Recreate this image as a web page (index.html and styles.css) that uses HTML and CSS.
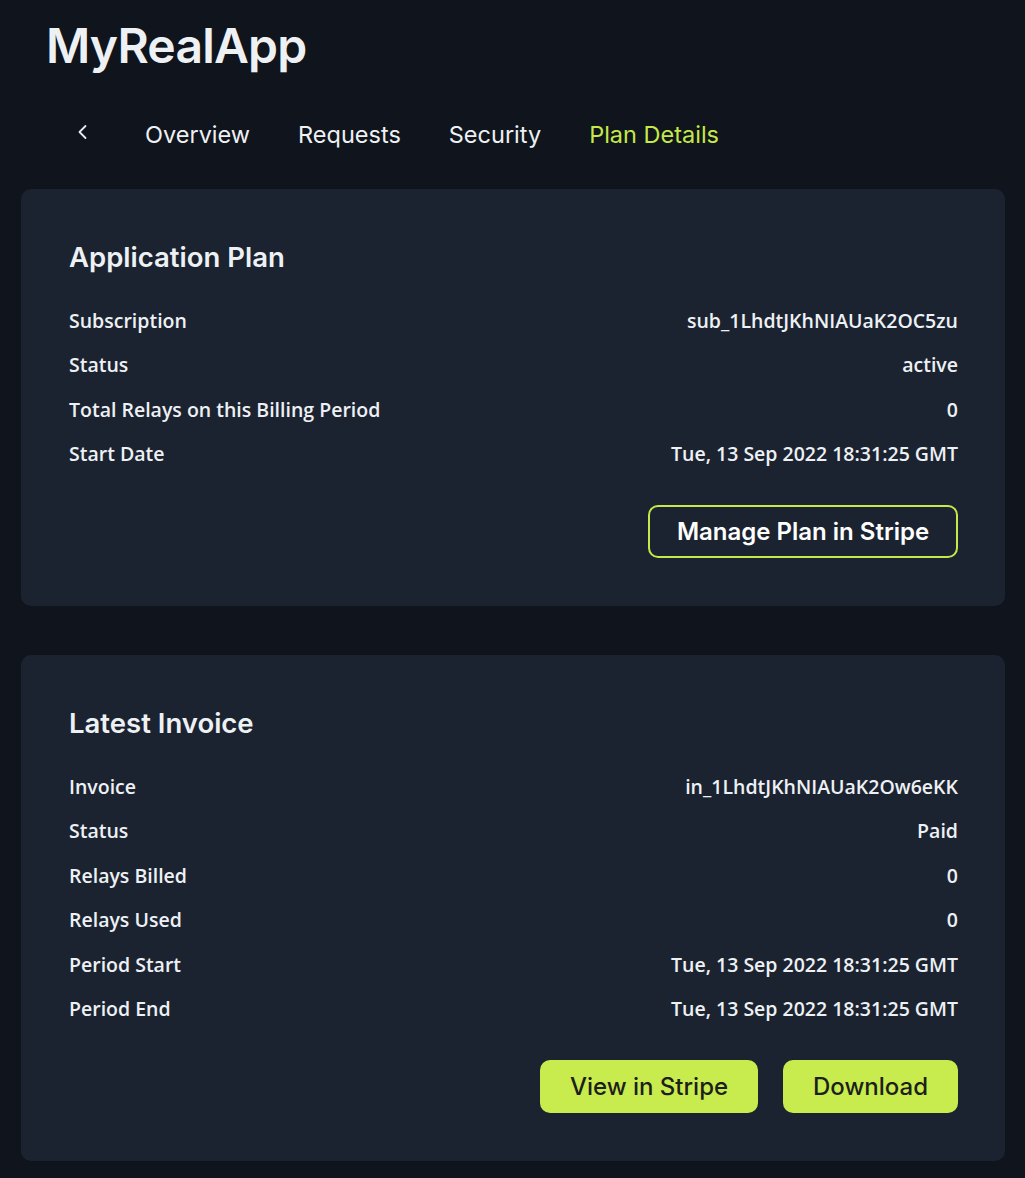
FILE: index.html
```html
<!DOCTYPE html>
<html lang="en">
<head>
<meta charset="utf-8">
<title>MyRealApp - Plan Details</title>
<link rel="stylesheet" href="styles.css">
</head>
<body>
<div class="page">
  <header class="header">
    <h1 class="app-title">MyRealApp</h1>
    <nav class="tabs">
      <a class="tab back" href="#" aria-label="Back">
        <svg width="12" height="16" viewBox="0 0 12 16"><path d="M8.5 2 L2.5 8 L8.5 14" fill="none" stroke="#e8edf2" stroke-width="1.8" stroke-linecap="round" stroke-linejoin="round"/></svg>
      </a>
      <a class="tab" href="#">Overview</a>
      <a class="tab" href="#">Requests</a>
      <a class="tab" href="#">Security</a>
      <a class="tab active" href="#">Plan Details</a>
    </nav>
  </header>

  <section class="card">
    <h2 class="card-title">Application Plan</h2>
    <dl class="rows">
      <div class="row"><dt>Subscription</dt><dd>sub_1LhdtJKhNIAUaK2OC5zu</dd></div>
      <div class="row"><dt>Status</dt><dd>active</dd></div>
      <div class="row"><dt>Total Relays on this Billing Period</dt><dd>0</dd></div>
      <div class="row"><dt>Start Date</dt><dd>Tue, 13 Sep 2022 18:31:25 GMT</dd></div>
    </dl>
    <div class="actions">
      <button class="btn btn-outline">Manage Plan in Stripe</button>
    </div>
  </section>

  <section class="card">
    <h2 class="card-title">Latest Invoice</h2>
    <dl class="rows">
      <div class="row"><dt>Invoice</dt><dd>in_1LhdtJKhNIAUaK2Ow6eKK</dd></div>
      <div class="row"><dt>Status</dt><dd>Paid</dd></div>
      <div class="row"><dt>Relays Billed</dt><dd>0</dd></div>
      <div class="row"><dt>Relays Used</dt><dd>0</dd></div>
      <div class="row"><dt>Period Start</dt><dd>Tue, 13 Sep 2022 18:31:25 GMT</dd></div>
      <div class="row"><dt>Period End</dt><dd>Tue, 13 Sep 2022 18:31:25 GMT</dd></div>
    </dl>
    <div class="actions">
      <button class="btn btn-solid btn-view">View in Stripe</button>
      <button class="btn btn-solid btn-download">Download</button>
    </div>
  </section>
</div>
</body>
</html>
```

FILE: styles.css
```css
* { box-sizing: border-box; }
html, body { margin: 0; padding: 0; }
body {
  background: #10141c;
  color: #eef1f4;
  font-family: "Open Sans", "Noto Sans", sans-serif;
}
.page {
  padding: 0 20px 20px 21px;
}
.header {
  padding-left: 25px;
}
.app-title {
  margin: 0;
  padding-top: 14px;
  font-family: Inter, "Noto Sans", sans-serif;
  font-weight: 600;
  font-size: 48px;
  line-height: 64px;
  letter-spacing: -0.8px;
  color: #eef1f4;
}
.tabs {
  display: flex;
  align-items: center;
  gap: 48px;
  padding-left: 31px;
  margin-top: 33px;
  height: 48px;
}
.tab {
  font-family: Inter, "Noto Sans", sans-serif;
  font-size: 23.5px;
  font-weight: 400;
  color: #eef1f4;
  text-decoration: none;
  line-height: 30px;
}
.tab.back {
  display: flex;
  align-items: center;
  margin-right: 8px;
  margin-top: -6px;
}
.tab.active { color: #c5e84a; }

.card {
  background: #1b2331;
  border-radius: 10px;
  padding: 50px 47px 48px 48px;
  margin-top: 30px;
}
.card + .card { margin-top: 49px; }
.card-title {
  margin: 0 0 23px;
  font-family: Inter, "Noto Sans", sans-serif;
  font-weight: 600;
  font-size: 27.5px;
  line-height: 36px;
  color: #eef1f4;
}
.rows { margin: 0; }
.row {
  display: flex;
  justify-content: space-between;
  align-items: center;
  height: 44.5px;
}
.row dt, .row dd {
  margin: 0;
  font-size: 19.5px;
  font-weight: 600;
  color: #eef1f4;
}
.actions {
  display: flex;
  justify-content: flex-end;
  gap: 25px;
  margin-top: 29px;
}
.btn {
  font-family: Inter, "Noto Sans", sans-serif;
  font-size: 24px;
  border-radius: 10px;
  cursor: pointer;
  height: 53px;
  padding: 0;
}
.btn-outline {
  background: transparent;
  border: 2.5px solid #c5e84a;
  color: #ffffff;
  font-weight: 600;
  width: 310px;
  height: 53px;
}
.btn-solid {
  background: #c8ec4d;
  border: none;
  color: #1d1f1c;
  font-weight: 500;
}
.btn-view { width: 218px; }
.btn-download { width: 175px; }
```
